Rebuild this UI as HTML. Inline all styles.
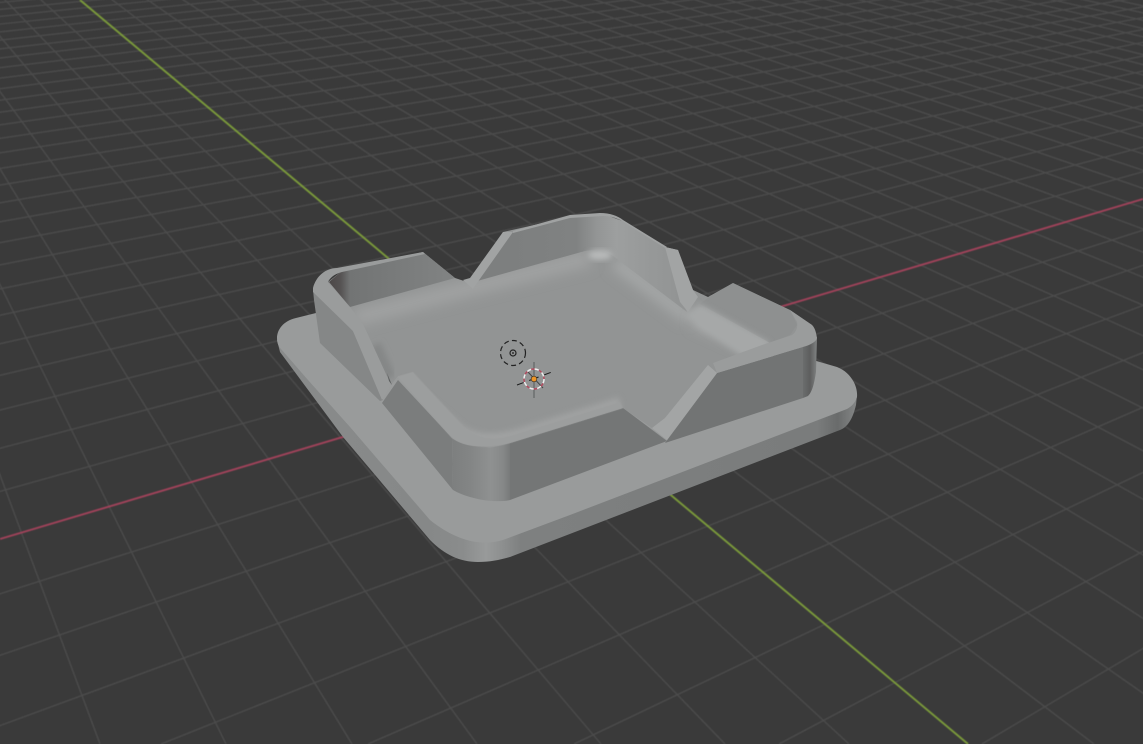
<!DOCTYPE html>
<html><head><meta charset="utf-8"><title>Viewport</title>
<style>html,body{margin:0;padding:0;background:#3a3a3a;width:1143px;height:744px;overflow:hidden}#v{position:relative;width:1143px;height:744px;overflow:hidden;contain:paint}svg{display:block;position:absolute;left:0;top:0}</style></head>
<body>
<div id="v">
<svg width="1143" height="744" viewBox="0 0 1143 744" xmlns="http://www.w3.org/2000/svg">
<defs>
<filter id="b3" x="-30%" y="-30%" width="160%" height="160%"><feGaussianBlur stdDeviation="3"/></filter>
<filter id="b6" x="-30%" y="-30%" width="160%" height="160%"><feGaussianBlur stdDeviation="6"/></filter>
<filter id="soft" x="-5%" y="-5%" width="110%" height="110%"><feGaussianBlur stdDeviation="0.45"/></filter>
<clipPath id="frame"><rect width="1143" height="744"/></clipPath>
<linearGradient id="pside" x1="277" x2="858" y1="0" y2="0" gradientUnits="userSpaceOnUse">
<stop offset="0" stop-color="#898b8b"/><stop offset=".26" stop-color="#868888"/><stop offset=".32" stop-color="#8a8c8c"/><stop offset=".36" stop-color="#989a9a"/><stop offset=".39" stop-color="#8c8e8e"/><stop offset=".42" stop-color="#7e8080"/><stop offset=".93" stop-color="#7a7c7c"/><stop offset=".965" stop-color="#696b6b"/><stop offset="1" stop-color="#868888"/></linearGradient>
<linearGradient id="fcorner" x1="452" x2="512" y1="0" y2="0" gradientUnits="userSpaceOnUse">
<stop offset="0" stop-color="#7d7f7f"/><stop offset=".3" stop-color="#838585"/><stop offset=".65" stop-color="#8f9191"/><stop offset=".85" stop-color="#868888"/><stop offset="1" stop-color="#747676"/></linearGradient>
<linearGradient id="rcorner" x1="802" x2="818" y1="0" y2="0" gradientUnits="userSpaceOnUse">
<stop offset="0" stop-color="#6d6f6f"/><stop offset=".5" stop-color="#5d5e5e"/><stop offset="1" stop-color="#868888"/></linearGradient>
<linearGradient id="bwall" x1="513" x2="680" y1="0" y2="0" gradientUnits="userSpaceOnUse">
<stop offset="0" stop-color="#7d7f7f"/><stop offset=".38" stop-color="#808282"/><stop offset=".5" stop-color="#939595"/><stop offset=".62" stop-color="#9d9f9f"/><stop offset=".8" stop-color="#979999"/><stop offset="1" stop-color="#929494"/></linearGradient>
<linearGradient id="lwall" x1="329" x2="460" y1="0" y2="0" gradientUnits="userSpaceOnUse">
<stop offset="0" stop-color="#4c4848"/><stop offset=".09" stop-color="#565353"/><stop offset=".16" stop-color="#727474"/><stop offset="1" stop-color="#828484"/></linearGradient>
<clipPath id="inner"><path d="M328 282L342 271L423 252L455 278L470 283L503 232L570 217L603 214L625 222L665 247L678 250L693 290L708 297L733 283L790 310L812 325L817 338L803 347L717 373L708 365L665 418L652 428L623 408L510 443L490 448L452 438L413 372L398 376L391 385L363 324Z"/></clipPath>
</defs>
<rect width="1143" height="744" fill="#3a3a3a"/>
<g clip-path="url(#frame)">
<g stroke="#4c4c4c" stroke-width="1.35" fill="none" filter="url(#soft)">
<path d="M-290 -305L100 744M-290 -305L226 744M-290 -305L352 744M-290 -305L477 744M-290 -305L601 744M-290 -305L725 744M-290 -305L849 744M-290 -305L1094 744M-290 -305L1216 744M-290 -305L1338 744M-290 -305L1458 744M-290 -305L1579 744M-290 -305L1699 744M-290 -305L1818 744M-290 -305L1938 744M-290 -305L2056 744M-290 -305L2174 744M-290 -305L2292 744M-290 -305L2408 744M-290 -305L2525 744M-290 -305L2642 744M-290 -305L2757 744M-290 -305L2873 744M-290 -305L2986 744M-290 -305L3100 744M-290 -305L3214 744M-290 -305L3329 744M-290 -305L3441 744M-290 -305L3555 744M-290 -305L3667 744M-290 -305L3777 744M-290 -305L3890 744M-290 -305L4000 744M-290 -305L4108 744M-290 -305L4218 744M-290 -305L4330 744M-290 -305L4439 744M-290 -305L4546 744M-290 -305L4654 744M-290 -305L4763 744"/>
<path d="M2665 -254L982 744M2665 -254L779 744M2665 -254L574 744M2665 -254L368 744M2665 -254L161 744M2665 -254L-50 744M2665 -254L-260 744M2665 -254L-472 744M2665 -254L-903 744M2665 -254L-1122 744M2665 -254L-1340 744M2665 -254L-1561 744M2665 -254L-1785 744M2665 -254L-2007 744M2665 -254L-2234 744M2665 -254L-2461 744M2665 -254L-2690 744M2665 -254L-2925 744M2665 -254L-3157 744M2665 -254L-3392 744M2665 -254L-3631 744M2665 -254L-3872 744M2665 -254L-4113 744M2665 -254L-4356 744M2665 -254L-4597 744M2665 -254L-4814 740M2665 -254L-4847 712M2665 -254L-4878 686M2665 -254L-4908 660M2665 -254L-4937 636M2665 -254L-4964 613M2665 -254L-4991 591M2665 -254L-5016 570M2665 -254L-5040 550M2665 -254L-5063 530M2665 -254L-5086 512M2665 -254L-5107 494M2665 -254L-5128 477"/>
</g>
<line x1="80" y1="0" x2="968" y2="744" stroke="#7a9a3a" stroke-width="1.9" filter="url(#soft)"/>
<line x1="0" y1="539" x2="1143" y2="199" stroke="#a0425a" stroke-width="1.9" filter="url(#soft)"/>

<!-- plate -->
<path d="M277 340L280 352L343 437L430 540C445 555 460 562 478 562C490 562 500 560 510 557L840 430C848 427 853 418 856 405L857 395L600 400Z" fill="url(#pside)"/>
<path d="M277 338C277 330 283 321 296 318L320 312L813 360L837 367C850 372 858 385 857 397C855 403 852 406 847 409L570 515L503 540C480 547 455 540 430 520L350 427L308 380L281 349C278 346 277 342 277 338Z" fill="#999b9b"/>

<!-- outer faces -->
<path d="M313 290L353 331L383 400L380 401L320 343L314 300Z" fill="#858787"/>
<path d="M382 403L398 380L452 438L453 490Z" fill="#7b7d7d"/>
<path d="M452 438C465 448 485 448 510 443L510 500C490 504 465 497 453 490Z" fill="url(#fcorner)"/>
<path d="M510 443L623 408L667 441L510 500Z" fill="#747676"/>
<path d="M665 443L717 373L803 347L803 398Z" fill="#727474"/>
<path d="M803 347C808 345 815 342 817 338L816 372C814 385 812 392 808 396L803 398Z" fill="url(#rcorner)"/>

<!-- interior base -->
<path d="M328 282L342 271L423 252L455 278L470 283L503 232L570 217L603 214L625 222L665 247L678 250L693 290L708 297L733 283L790 310L812 325L817 338L803 347L717 373L708 365L665 418L652 428L623 408L510 443L490 448L452 438L413 372L398 376L391 385L363 324Z" fill="#929494"/>

<g clip-path="url(#inner)">
<path d="M355 318L470 288L590 258" stroke="#a0a2a2" stroke-width="16" fill="none" filter="url(#b6)"/>
<path d="M615 262L690 318" stroke="#a5a7a7" stroke-width="14" fill="none" filter="url(#b6)"/>
<path d="M695 318L770 352" stroke="#adafaf" stroke-width="16" fill="none" filter="url(#b6)"/>
<path d="M403 382L460 430C480 442 500 440 530 430L620 402" stroke="#a0a2a2" stroke-width="10" fill="none" filter="url(#b3)"/>
<path d="M375 345L390 378" stroke="#858787" stroke-width="12" fill="none" filter="url(#b3)"/>
<path d="M513 232L570 217L603 214C612 214 620 216 625 222L665 247L687 312L613 256C605 250 595 249 585 251L470 283Z" fill="url(#bwall)"/>
<ellipse cx="600" cy="255" rx="12" ry="5" fill="#b8baba" filter="url(#b3)"/>
<path d="M329 282L342 271L423 252L455 278L350 307Z" fill="url(#lwall)"/>
<path d="M708 298L733 283L790 310L797 325L790 335L770 343L700 304Z" fill="#8e9090"/>
<path d="M700 304L770 343L745 358L685 316Z" fill="#a6a8a8" filter="url(#b3)"/>
</g>

<!-- rims -->
<path d="M313 288C316 276 326 268 337 268L423 252L425 254L342 272C334 274 330 278 328 282L350 307L363 324L353 331L313 292Z" fill="#9a9c9c"/>
<path d="M513 231L570 215L600 213C610 213 618 216 623 220L667 247L665 248L625 223C618 218 610 216 603 216L570 218L513 233Z" fill="#a0a2a2"/>
<path d="M717 373L803 347C810 345 816 342 817 338C816 332 815 328 812 325L790 310L797 322C798 328 796 332 792 335L762 345L713 363Z" fill="#9a9c9c"/>
<path d="M398 377L413 372L465 428C480 440 495 440 510 436L620 402L623 408L510 443C490 449 468 448 452 438Z" fill="#9c9e9e" filter="url(#soft)"/>

<!-- chamfer strips -->
<path d="M353 331L363 324L391 385L382 400Z" fill="#9a9c9c"/>
<path d="M387 373L392 385L389 381Z" fill="#5c5e5e"/>
<path d="M503 232L513 232L477 283L473 289L463 280L470 278Z" fill="#a1a3a3"/>
<path d="M665 247L678 250L693 290L698 297L688 312L680 302Z" fill="#a2a4a4"/>
<path d="M652 428L665 418L708 365L717 373L667 440Z" fill="#a3a5a5"/>

<!-- origin gizmo -->
<g fill="none">
<circle cx="513" cy="353" r="12.5" stroke="#222" stroke-width="1.2" stroke-dasharray="5 3.2"/>
<circle cx="513" cy="353" r="3" stroke="#222" stroke-width="1.2"/>
<circle cx="513" cy="353" r="1" fill="#333"/>
<line x1="534" y1="362" x2="534" y2="398" stroke="#666868" stroke-width="1.3"/>
<line x1="517" y1="385" x2="552" y2="372" stroke="#1c1c1c" stroke-width="1" stroke-dasharray="7 6 10 6 7"/>
<line x1="528" y1="372" x2="543" y2="388" stroke="#444" stroke-width="1"/>
<circle cx="534" cy="379" r="10" stroke="#eee" stroke-width="1.5" stroke-dasharray="4.5 3.4"/>
<circle cx="534" cy="379" r="10" stroke="#b34a5e" stroke-width="1.5" stroke-dasharray="3.4 4.5" stroke-dashoffset="-4.5"/>
</g>
<circle cx="534" cy="379" r="2.8" fill="#ec9528" stroke="#3a3020" stroke-width=".6"/>
</g>
</svg>
</div>
</body></html>
